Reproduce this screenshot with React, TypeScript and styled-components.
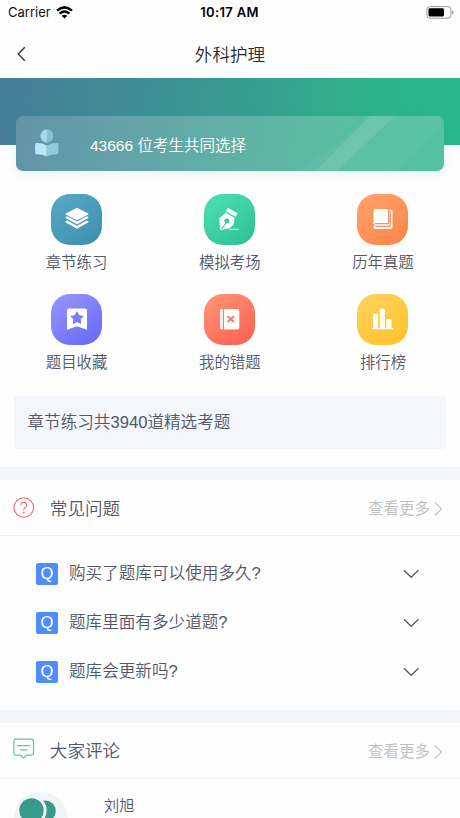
import React from "react";
import styled, { createGlobalStyle } from "styled-components";

const GlobalStyle = createGlobalStyle`
  * { box-sizing: border-box; }
  html, body { margin: 0; padding: 0; background: #fefefe; }
  body {
    height: 818px;
    overflow: hidden;
    font-family: "Liberation Sans", "Noto Sans CJK SC", sans-serif;
    font-weight: 350;
    color: #525769;
  }
  svg { display: block; flex: none; }
`;

const Page = styled.div`
  width: 460px;
  height: 818px;
  overflow: hidden;
  background: #fefefe;
`;

const StatusBar = styled.div`
  height: 24px;
  padding: 0 6px 0 8px;
  display: grid;
  grid-template-columns: 1fr auto 1fr;
  align-items: center;
  font-family: Inter, sans-serif;
  font-weight: 400;
  font-size: 13px;
  color: #111;
`;

const Carrier = styled.div`
  display: flex;
  align-items: center;
  gap: 5px;
  letter-spacing: 0;
`;

const Clock = styled.div`
  font-weight: 600;
  color: #000;
  letter-spacing: 0.35px;
  margin-right: 3px;
`;

const Battery = styled.div`
  display: flex;
  justify-content: flex-end;
`;

const NavBar = styled.div`
  height: 54px;
  padding: 0 16px;
  display: grid;
  grid-template-columns: 1fr auto 1fr;
  align-items: center;
`;

const NavTitle = styled.div`
  font-size: 17.6px;
  line-height: 26px;
  color: #2c2c2c;
  padding-top: 7px;
`;

const BackSlot = styled.div`
  padding-top: 5px;
`;

const Banner = styled.div`
  height: 67px;
  padding: 38px 16px 0;
  background: linear-gradient(100deg, #477d9a 0%, #399a91 49%, #2eb28b 78%, #2bb789 100%);
`;

const BannerCard = styled.div`
  position: relative;
  height: 55px;
  border-radius: 7px;
  overflow: hidden;
  display: flex;
  align-items: center;
  padding-left: 18px;
  background: linear-gradient(100deg, #6393a9 0%, #62afa7 48%, #59bda2 75%, #53c39f 100%);
`;

const CardShadow = styled.div`
  border-radius: 7px;
  box-shadow: 0 2px 8px rgba(60, 150, 170, 0.14);
`;

const Shine = styled.svg`
  position: absolute;
  right: 0;
  top: 0;
`;

const BannerText = styled.div`
  margin-left: 30px;
  font-size: 15.5px;
  line-height: 24px;
  padding-top: 4px;
  color: #fff;
`;

const Menu = styled.div`
  display: grid;
  grid-template-columns: repeat(3, 153.2px);
  grid-auto-rows: 100px;
  padding-top: 48.5px;
  height: 251px;
`;

const MenuItem = styled.div`
  display: flex;
  flex-direction: column;
  align-items: center;
`;

const Tile = styled.div<{ $from: string; $to: string }>`
  width: 51px;
  height: 51px;
  border-radius: 19px;
  display: flex;
  align-items: center;
  justify-content: center;
  background: linear-gradient(145deg, ${(p) => p.$from}, ${(p) => p.$to});
`;

const MenuLabel = styled.div`
  margin-top: 6.5px;
  font-size: 15.4px;
  line-height: 24px;
`;

const Notice = styled.div`
  height: 53px;
  margin: 0 14px 18px;
  padding: 0 13.5px 3px;
  display: flex;
  align-items: center;
  border-radius: 4px;
  background: #f3f6fa;
  font-size: 16.6px;
`;

const Divider = styled.div`
  height: 13px;
  background: #f3f6f9;
`;

const SectionHeader = styled.div`
  height: 56px;
  padding: 0 17px 0 13px;
  display: flex;
  align-items: center;
  border-bottom: 1px solid #f1f2f3;
`;

const SectionTitle = styled.div`
  margin-left: 14.8px;
  padding-top: 2px;
  font-size: 17.6px;
  line-height: 26px;
  flex: 1;
`;

const More = styled.div`
  display: flex;
  align-items: center;
  gap: 4px;
  font-size: 15.5px;
  line-height: 24px;
  color: #bebebe;
  padding-top: 3px;
`;

const FaqList = styled.div`
  height: 173.5px;
  padding: 13.5px 41px 0 36px;
`;

const FaqRow = styled.div`
  height: 49px;
  display: flex;
  align-items: center;
`;

const QBadge = styled.div`
  width: 22px;
  height: 22px;
  border-radius: 2px;
  background: #4e8dfb;
  color: #fff;
  font-size: 16.5px;
  line-height: 21px;
  text-align: center;
`;

const Question = styled.div`
  flex: 1;
  margin-left: 11px;
  font-size: 16.6px;
  line-height: 26px;
`;

const Comment = styled.div`
  display: flex;
  padding: 13px 14px 0;
`;

const Author = styled.div`
  margin-left: 36px;
  padding-top: 2px;
  font-size: 15.2px;
  line-height: 24px;
`;

const LayersIcon = () => (
  <svg width="24" height="24" viewBox="0 0 24 24" fill="#fff">
    <path d="M12 1.2 23.2 7 12 12.8.8 7Z" stroke="#fff" strokeWidth="1" strokeLinejoin="round" />
    <path d="M.6 10.1 2.2 9.3 12 14.4 21.8 9.3 23.4 10.1V11.1L12 17.3.6 11.1Z" />
    <path d="M.6 14.3 2.2 13.5 12 18.7 21.8 13.5 23.4 14.3V15.3L12 21.7.6 15.3Z" />
  </svg>
);

const PenIcon = () => (
  <svg width="24" height="24" viewBox="0 0 24 24">
    <path d="M10.1 1.2 19.2 6.4 17.6 9.4 8.4 4.2Z" fill="#fff" stroke="#fff" strokeWidth=".6" strokeLinejoin="round" />
    <path d="M7.8 6 16.3 11 15.4 17.4 11.6 20.8 3.4 22.8Q2.4 22.8 2.3 21.6L1.6 11.2Z" fill="#fff" stroke="#fff" strokeWidth=".5" strokeLinejoin="round" />
    <circle cx="8.8" cy="14" r="2.5" fill="#38cea2" />
    <path d="M8 15.5 3.8 22.3" stroke="#38cea2" strokeWidth="1.1" />
    <path d="M11 22.3H20.6" stroke="#fff" strokeWidth="1" />
  </svg>
);

const BookIcon = () => (
  <svg width="22" height="22" viewBox="0 0 22 22" fill="#fff">
    <path d="M4 1H14.7Q16 1 16 2.3V15H3.6L1.5 16.3V3.3Q1.5 1 4 1Z" />
    <path d="M17.5 1.2Q20.5 1.4 20.5 3.5V18.5Q20.5 21 18 21H4Q1.5 21 1.5 18.5Q1.5 16.2 4 16.2H16.4Q17.5 16.2 17.5 15ZM3.6 17.7V19H17.2Q18.9 19 18.9 17.2V3.4H18V16.4Q18 17.7 16.7 17.7Z" fillRule="evenodd" />
  </svg>
);

const BookmarkIcon = () => (
  <svg width="22" height="24" viewBox="0 0 22 24">
    <path d="M3 1.5H19Q21 1.5 21 3.5V22.7L11 19.2 1 22.7V3.5Q1 1.5 3 1.5Z" fill="#fff" />
    <path d="m11 4.8 1.9 3.9 4.3.6-3.1 3 .7 4.3-3.8-2-3.8 2 .7-4.3-3.1-3 4.3-.6Z" fill="#7a7cf5" stroke="#7a7cf5" strokeWidth="1" strokeLinejoin="round" />
  </svg>
);

const WrongIcon = () => (
  <svg width="22" height="24" viewBox="0 0 22 24">
    <path d="M3.8 2V22.5H3Q1 22.5 1 20.5V4Q1 2 3 2ZM5 2H18Q20.3 2 20.3 4V20.5Q20.3 22.5 18 22.5H5Z" fill="#fff" />
    <path d="m8.6 9.2 6.4 5.8M15 9.2l-6.4 5.8" stroke="#fd7964" strokeWidth="1.9" />
  </svg>
);

const ChartIcon = () => (
  <svg width="24" height="24" viewBox="0 0 24 24" fill="#fff">
    <path d="M2.2 21.3V7.5Q2.2 6.5 3.2 6.5H6Q7 6.5 7 7.5V21.3ZM8.7 21.3V2.8Q8.7 1.7 9.7 1.7H12.8Q13.9 1.7 13.9 2.8V21.3ZM15.4 21.3V13Q15.4 12 16.4 12H19.5Q20.5 12 20.5 13V21.3Z" />
    <path d="M1.2 21H22V22.2H1.2Z" />
  </svg>
);

const Chevron = () => (
  <svg width="16" height="10" viewBox="0 0 16 10" fill="none" stroke="#555965" strokeWidth="1.2">
    <path d="m1 1.3 7.2 7 7.2-7" />
  </svg>
);

const MoreLink = () => (
  <More>
    查看更多
    <svg width="9" height="16" viewBox="0 0 9 16" fill="none" stroke="#c4c4c4" strokeWidth="1.2">
      <path d="m.7 1.5 6.8 6.5-6.8 6.5" />
    </svg>
  </More>
);

const menu = [
  { label: "章节练习", from: "#56aac7", to: "#408dae", icon: <LayersIcon /> },
  { label: "模拟考场", from: "#4fe0b2", to: "#2bc094", icon: <PenIcon /> },
  { label: "历年真题", from: "#ffa36e", to: "#fb8447", icon: <BookIcon /> },
  { label: "题目收藏", from: "#9898fb", to: "#6666f4", icon: <BookmarkIcon /> },
  { label: "我的错题", from: "#ff9877", to: "#fc5c4f", icon: <WrongIcon /> },
  { label: "排行榜", from: "#ffd461", to: "#fec128", icon: <ChartIcon /> },
];

const questions = ["购买了题库可以使用多久?", "题库里面有多少道题?", "题库会更新吗?"];

export default function App() {
  return (
    <>
      <GlobalStyle />
      <Page>
        <StatusBar>
          <Carrier>
            Carrier
            <svg width="17" height="13" viewBox="0 0 17 13" fill="none" stroke="#000" strokeWidth="2.5">
              <path d="M1 4.6Q8.5-1.8 16 4.6" />
              <path d="M3.6 7.6Q8.5 3.4 13.4 7.6" />
              <path d="M8.5 12.4 5.7 9.7Q8.5 7.6 11.3 9.7Z" fill="#000" stroke="none" />
            </svg>
          </Carrier>
          <Clock>10:17 AM</Clock>
          <Battery>
            <svg width="28" height="13" viewBox="0 0 28 13">
              <rect x=".9" y=".6" width="24" height="11.6" rx="3" fill="none" stroke="#999" />
              <rect x="2.5" y="2.3" width="15.5" height="8.2" rx="1.4" fill="#000" />
              <path d="M26 4.5q1.6.6 1.6 1.9T26 8.3Z" fill="#999" />
            </svg>
          </Battery>
        </StatusBar>
        <NavBar>
          <BackSlot>
            <svg width="11" height="16" viewBox="0 0 11 16" fill="none" stroke="#333" strokeWidth="1.4">
              <path d="M8.8 1.3 2.2 8l6.6 6.7" />
            </svg>
          </BackSlot>
          <NavTitle>外科护理</NavTitle>
        </NavBar>
        <Banner>
          <CardShadow>
            <BannerCard>
              <Shine width="150" height="55" viewBox="0 0 150 55">
                <path d="M76 0H101L43 55H0Q38 37 76 0Z" fill="#fff" opacity=".04" />
                <path d="M76 0H101L43 55H22Z" fill="#fff" opacity=".09" />
                <path d="M150 0V8L102 55H43L101 0Z" fill="#fff" opacity=".03" />
              </Shine>
              <svg width="26" height="30" viewBox="0 0 26 30">
                <circle cx="12.8" cy="7" r="6.4" fill="#a9dbed" />
                <path d="M12.8.6a6.4 6.4 0 0 1 0 12.8Z" fill="#85bfd4" />
                <path d="M1.5 14Q7 13.5 12.8 16.4V27.5Q7 24.7 1.5 25.3 .3 19.3 1.5 14Z" fill="#b9e7f3" />
                <path d="M24.1 14Q18.6 13.5 12.8 16.4V27.5Q18.6 24.7 24.1 25.3 25.3 19.3 24.1 14Z" fill="#8fcbdc" />
              </svg>
              <BannerText>43666 位考生共同选择</BannerText>
            </BannerCard>
          </CardShadow>
        </Banner>
        <Menu>
          {menu.map((m) => (
            <MenuItem key={m.label}>
              <Tile $from={m.from} $to={m.to}>{m.icon}</Tile>
              <MenuLabel>{m.label}</MenuLabel>
            </MenuItem>
          ))}
        </Menu>
        <Notice>章节练习共3940道精选考题</Notice>
        <Divider />
        <SectionHeader>
          <svg width="22" height="22" viewBox="0 0 22 22" fill="none" stroke="#ee6b75" strokeWidth="1.1">
            <circle cx="10.8" cy="10.5" r="9.8" />
            <path d="M8 8.1Q8 5.3 10.8 5.3T13.6 8Q13.6 9.4 12.2 10.4T10.8 13.2" />
            <circle cx="10.8" cy="15.6" r=".4" fill="#ee6b75" />
          </svg>
          <SectionTitle>常见问题</SectionTitle>
          <MoreLink />
        </SectionHeader>
        <FaqList>
          {questions.map((q) => (
            <FaqRow key={q}>
              <QBadge>Q</QBadge>
              <Question>{q}</Question>
              <Chevron />
            </FaqRow>
          ))}
        </FaqList>
        <Divider />
        <SectionHeader>
          <svg width="22" height="24" viewBox="0 0 22 24" fill="none" stroke="#65c3a4" strokeWidth="1.2">
            <path d="M3 1.2H18.3Q20.5 1.2 20.5 3.4V15Q20.5 17.2 18.3 17.2H13.6L10.6 20 7.6 17.2H3Q.8 17.2.8 15V3.4Q.8 1.2 3 1.2Z" />
            <path d="M4.2 7.6H17.3M7 11.8H14.4" />
          </svg>
          <SectionTitle>大家评论</SectionTitle>
          <MoreLink />
        </SectionHeader>
        <Comment>
          <svg width="54" height="54" viewBox="0 0 54 54">
            <circle cx="27" cy="27" r="27" fill="#f2f5f7" />
            <circle cx="31.3" cy="19" r="10.5" fill="#389a8b" />
            <circle cx="17.5" cy="18.5" r="15.2" fill="#f2f5f7" />
            <circle cx="17.5" cy="18.5" r="12.2" fill="#389a8b" />
          </svg>
          <Author>刘旭</Author>
        </Comment>
      </Page>
    </>
  );
}
